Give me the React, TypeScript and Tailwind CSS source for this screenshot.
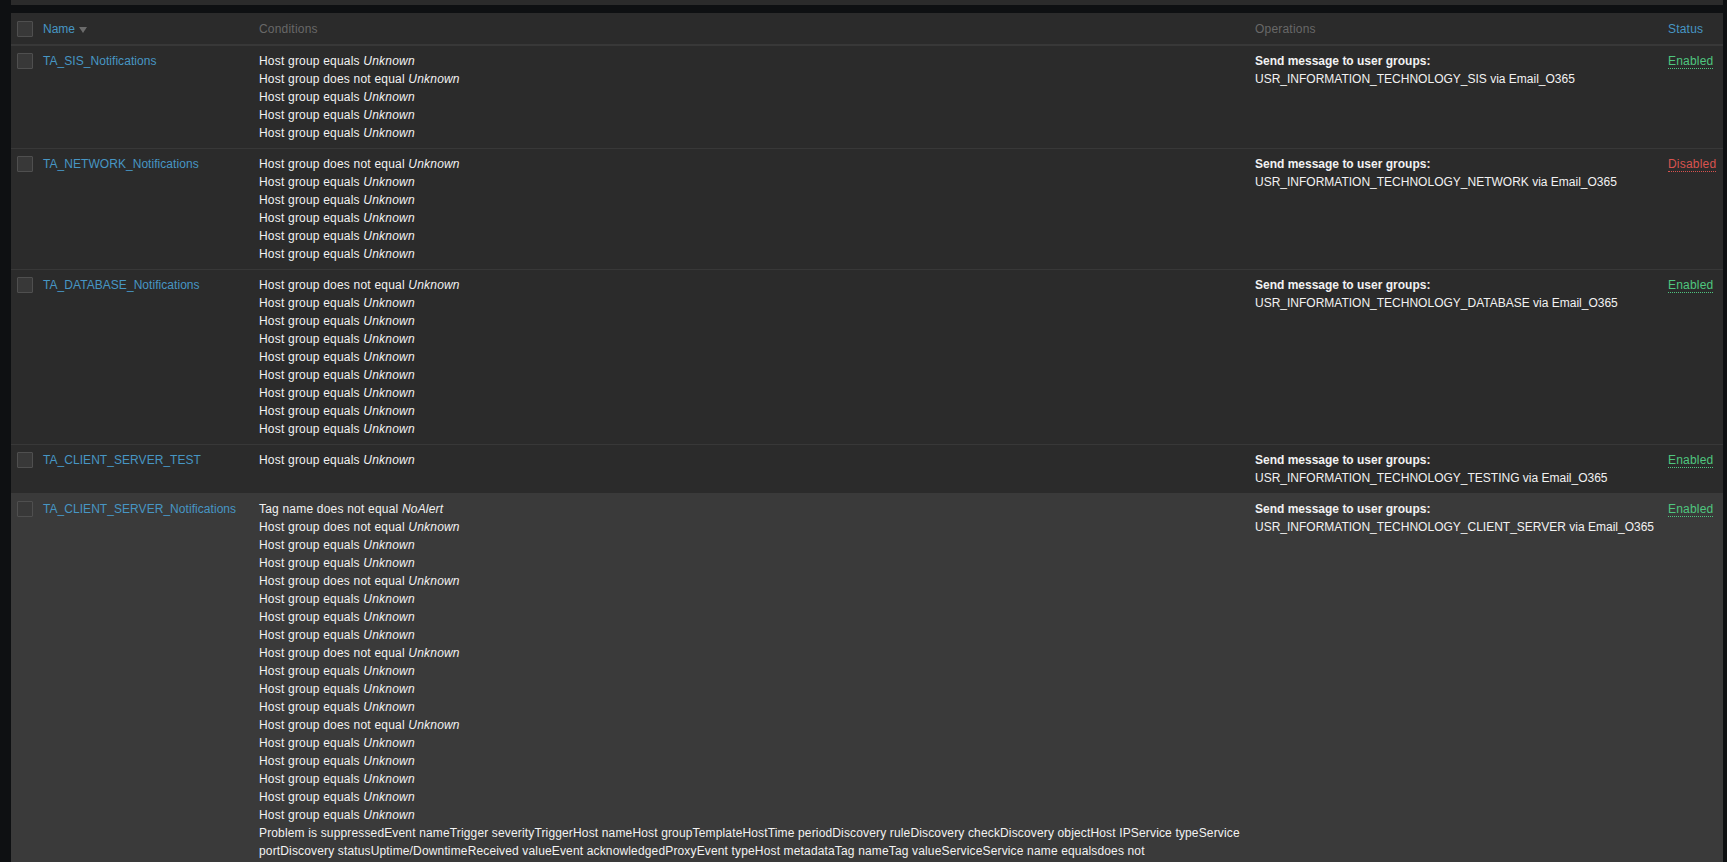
const EQ = 'Host group equals'
const NE = 'Host group does not equal'

type Rule = {
  name: string
  conditions: [string, string][]
  group: string
  enabled: boolean
  hovered?: boolean
  extra?: boolean
}

const hg = (list: string): [string, string][] =>
  list.split('').map((c) => [c === 'e' ? EQ : NE, 'Unknown'])

const rules: Rule[] = [
  { name: 'TA_SIS_Notifications', conditions: hg('eneee'), group: 'USR_INFORMATION_TECHNOLOGY_SIS', enabled: true },
  { name: 'TA_NETWORK_Notifications', conditions: hg('neeeee'), group: 'USR_INFORMATION_TECHNOLOGY_NETWORK', enabled: false },
  { name: 'TA_DATABASE_Notifications', conditions: hg('neeeeeeee'), group: 'USR_INFORMATION_TECHNOLOGY_DATABASE', enabled: true },
  { name: 'TA_CLIENT_SERVER_TEST', conditions: hg('e'), group: 'USR_INFORMATION_TECHNOLOGY_TESTING', enabled: true },
  {
    name: 'TA_CLIENT_SERVER_Notifications',
    conditions: [['Tag name does not equal', 'NoAlert'], ...hg('neeneeeneeeneeeee')],
    group: 'USR_INFORMATION_TECHNOLOGY_CLIENT_SERVER',
    enabled: true,
    hovered: true,
    extra: true,
  },
]

function Check() {
  return <div className="h-4 w-4 rounded-[1px] border border-[#4f4f4f] bg-[#383838]" />
}

export default function App() {
  return (
    <div className="h-[862px] overflow-hidden bg-[#0e1012] pl-[11px] pr-1 font-['Liberation_Sans',Arial,sans-serif] text-xs leading-[18px] text-[#f2f2f2]">
      <div className="h-[5px] bg-[#2b2b2b]" />
      <div className="mt-2 bg-[#2b2b2b]">
        {/* header */}
        <div className="flex h-[33px] items-center border-b-2 border-[#383838] pl-[6px]">
          <div className="w-[26px] shrink-0"><Check /></div>
          <div className="flex w-[216px] shrink-0 items-center gap-1 text-[#4796c4]">
            Name
            <span className="mt-[2px] h-0 w-0 border-x-[4px] border-t-[6px] border-x-transparent border-t-[#6b6b6b]" />
          </div>
          <div className="w-[996px] shrink-0 tracking-[0.2px] text-[#686868]">Conditions</div>
          <div className="w-[413px] shrink-0 tracking-[0.2px] text-[#686868]">Operations</div>
          <div className="tracking-[0.2px] text-[#4796c4]">Status</div>
        </div>
        {rules.map((r, i) => (
          <div
            key={r.name}
            className={`flex pb-[6px] pl-[6px] ${r.hovered ? 'bg-[#3a3a3a] pt-[7px]' : 'pt-[6px]'} ${i < 3 ? 'border-b border-[#383838]' : ''}`}
          >
            <div className="w-[26px] shrink-0 pt-px"><Check /></div>
            <div className="w-[216px] shrink-0 tracking-[0.05px] text-[#4796c4]">{r.name}</div>
            <div className="w-[996px] shrink-0 pr-[8px] tracking-[0.2px]">
              {r.conditions.map(([label, value], j) => (
                <div key={j}>
                  {label} <em>{value}</em>
                </div>
              ))}
              {r.extra && (
                <div className="tracking-[0.15px]">
                  Problem is suppressedEvent nameTrigger severityTriggerHost nameHost groupTemplateHostTime periodDiscovery ruleDiscovery checkDiscovery objectHost IPService typeService portDiscovery statusUptime/DowntimeReceived valueEvent acknowledgedProxyEvent typeHost metadataTag nameTag valueServiceService name equalsdoes not
                </div>
              )}
            </div>
            <div className="w-[413px] shrink-0">
              <div className="font-bold">Send message to user groups:</div>
              <div>{r.group} via Email_O365</div>
            </div>
            <div>
              <span className={`border-b border-dotted tracking-[0.2px] ${r.enabled ? 'border-[#4fc67f] text-[#4fc67f]' : 'border-[#d9534f] text-[#d9534f]'}`}>
                {r.enabled ? 'Enabled' : 'Disabled'}
              </span>
            </div>
          </div>
        ))}
      </div>
    </div>
  )
}
